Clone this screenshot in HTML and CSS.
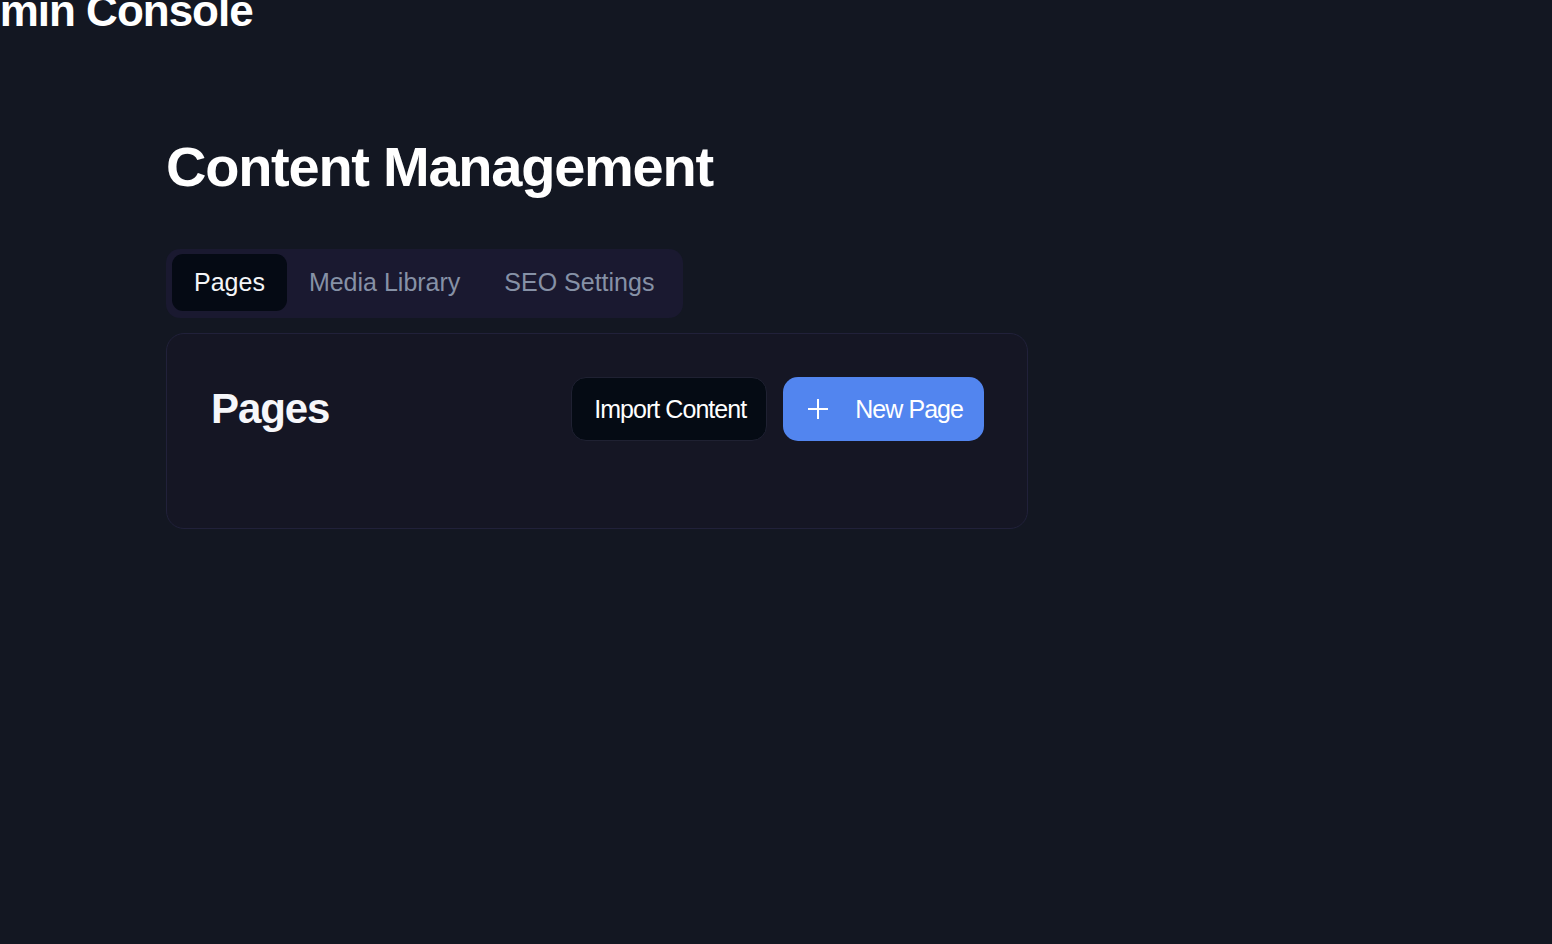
FILE: index.html
```html
<!DOCTYPE html>
<html lang="en">
<head>
<meta charset="utf-8">
<title>Admin Console</title>
<link rel="stylesheet" href="styles.css">
</head>
<body>
<header class="app-header">
  <h1 class="app-title">Admin Console</h1>
</header>
<main class="main">
  <h2 class="page-title">Content Management</h2>
  <nav class="tabs">
    <button class="tab tab-active">Pages</button>
    <button class="tab">Media Library</button>
    <button class="tab">SEO Settings</button>
  </nav>
  <section class="card">
    <div class="card-header">
      <h3 class="card-title">Pages</h3>
      <div class="actions">
        <button class="btn btn-dark">Import Content</button>
        <button class="btn btn-primary">
          <svg class="icon" width="20" height="20" viewBox="0 0 20 20" fill="none" stroke="currentColor" stroke-width="2" stroke-linecap="butt"><path d="M0 10h20M10 0v20"/></svg>
          <span>New Page</span>
        </button>
      </div>
    </div>
  </section>
</main>
</body>
</html>
```
FILE: styles.css
```css
* { box-sizing: border-box; }
html, body { margin: 0; padding: 0; }
body {
  background: #131722;
  color: #ffffff;
  font-family: "Liberation Sans", Arial, sans-serif;
  min-height: 944px;
  overflow: hidden;
}
.app-header {
  height: 34px;
}
.app-title {
  margin: -11px 0 0 -57px;
  font-size: 44px;
  line-height: 44px;
  font-weight: 700;
  letter-spacing: -1px;
  white-space: nowrap;
}
.main {
  padding: 104px 0 0 166px;
  width: 1028px;
}
.page-title {
  margin: 0;
  font-size: 56px;
  line-height: 80px;
  font-weight: 700;
  letter-spacing: -1.25px;
}
.tabs {
  margin-top: 42px;
  display: inline-flex;
  padding: 5px 7px 7px 6px;
  background: #1a1930;
  border-radius: 14px;
}
.tab {
  font-family: inherit;
  font-size: 25px;
  line-height: 57px;
  height: 57px;
  padding: 0 22px;
  border: 0;
  background: transparent;
  color: #8691a6;
  border-radius: 11px;
  cursor: pointer;
}
.tab-active {
  background: #050a14;
  color: #f4f5f8;
}
.card {
  margin-top: 15px;
  width: 862px;
  border: 1px solid #21213a;
  border-radius: 18px;
  background: #151624;
  padding: 43px 43px 87px 44px;
}
.card-header {
  display: flex;
  align-items: center;
  justify-content: space-between;
}
.card-title {
  margin: 0;
  font-size: 42px;
  font-weight: 700;
  letter-spacing: -1.1px;
  color: #f6f7fa;
}
.actions {
  display: flex;
  gap: 16px;
}
.btn {
  font-family: inherit;
  font-size: 25px;
  letter-spacing: -0.95px;
  height: 64px;
  border-radius: 15px;
  display: inline-flex;
  align-items: center;
  cursor: pointer;
  color: #ffffff;
}
.btn-dark {
  background: #050b14;
  border: 1px solid #1f2132;
  padding: 0 20px 0 22px;
}
.btn-primary {
  background: #5285ef;
  border: 0;
  padding: 0 21px 0 25px;
  gap: 27px;
}
.icon { display: block; }
```
